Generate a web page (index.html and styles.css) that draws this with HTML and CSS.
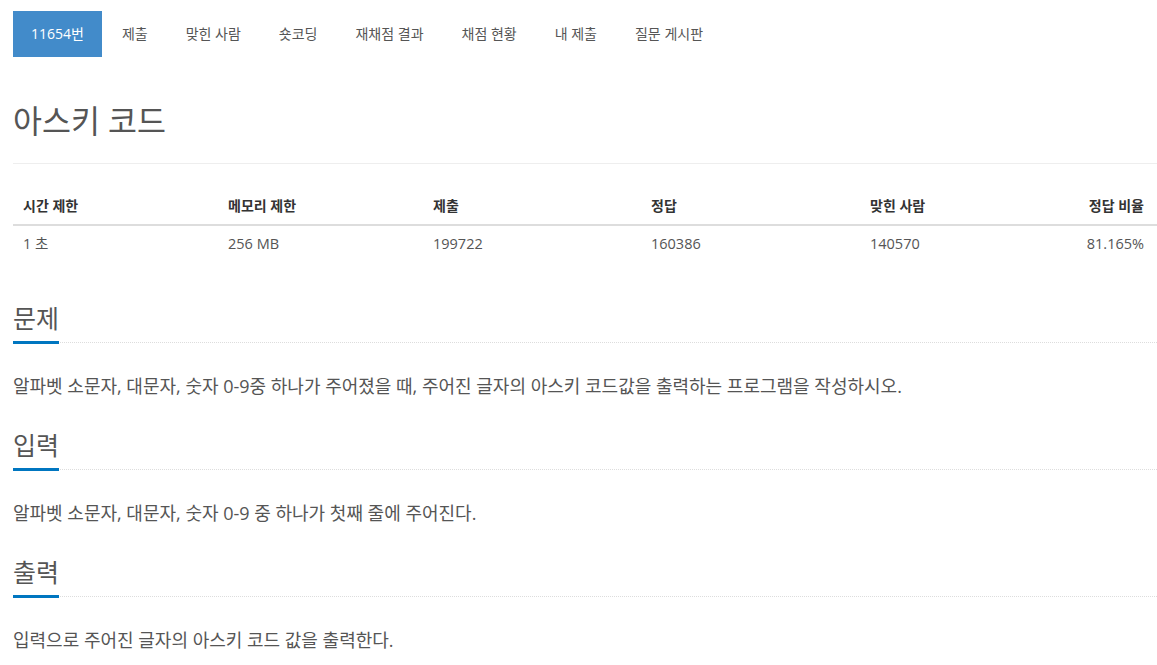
FILE: index.html
```html
<!DOCTYPE html>
<html lang="ko">
<head>
<meta charset="utf-8">
<title>아스키 코드</title>
<link rel="stylesheet" href="styles.css">
</head>
<body>
<ul class="nav">
  <li class="tab active">11654번</li>
  <li class="tab">제출</li>
  <li class="tab">맞힌 사람</li>
  <li class="tab">숏코딩</li>
  <li class="tab">재채점 결과</li>
  <li class="tab">채점 현황</li>
  <li class="tab">내 제출</li>
  <li class="tab">질문 게시판</li>
</ul>
<main class="content">
  <h1 class="title">아스키 코드</h1>
  <table class="info">
    <colgroup>
      <col class="c1"><col class="c2"><col class="c3"><col class="c4"><col class="c5"><col class="c6">
    </colgroup>
    <thead>
      <tr><th>시간 제한</th><th>메모리 제한</th><th>제출</th><th>정답</th><th>맞힌 사람</th><th class="right">정답 비율</th></tr>
    </thead>
    <tbody>
      <tr><td>1 초 </td><td>256 MB</td><td>199722</td><td>160386</td><td>140570</td><td class="right">81.165%</td></tr>
    </tbody>
  </table>
  <section class="section">
    <div class="headline"><h2>문제</h2></div>
    <p>알파벳 소문자, 대문자, 숫자 0-9중 하나가 주어졌을 때, 주어진 글자의 아스키 코드값을 출력하는 프로그램을 작성하시오.</p>
  </section>
  <section class="section">
    <div class="headline"><h2>입력</h2></div>
    <p>알파벳 소문자, 대문자, 숫자 0-9 중 하나가 첫째 줄에 주어진다.</p>
  </section>
  <section class="section">
    <div class="headline"><h2>출력</h2></div>
    <p>입력으로 주어진 글자의 아스키 코드 값을 출력한다.</p>
  </section>
</main>
</body>
</html>
```
FILE: styles.css
```css
html, body {
  margin: 0;
  padding: 0;
  background: #fff;
}
body {
  font-family: "Open Sans", "Noto Sans CJK KR", sans-serif;
  color: #555;
  overflow: hidden;
}
.nav {
  list-style: none;
  margin: 11px 0 0 0;
  padding: 0 0 0 13px;
  display: flex;
  gap: 2px;
}
.tab {
  height: 46px;
  line-height: 46px;
  padding: 0 18px;
  font-size: 14px;
  color: #555;
  white-space: nowrap;
}
.tab.active {
  background: #428bca;
  color: #fff;
}
.content {
  padding-left: 13px;
}
.title {
  margin: 44px 0 0 0;
  padding-bottom: 22px;
  font-size: 31.5px;
  line-height: 40px;
  font-weight: 400;
  color: #555;
  border-bottom: 1px solid #eee;
}
.info {
  margin-top: 24px;
  width: 1144px;
  border-collapse: collapse;
  table-layout: fixed;
  font-size: 14px;
}
.c1 { width: 205px; }
.c2 { width: 205px; }
.c3 { width: 218px; }
.c4 { width: 219px; }
.c5 { width: 200px; }
.c6 { width: 97px; }
.info th, .info td {
  padding: 8px 10px;
  line-height: 20px;
  text-align: left;
  color: #333;
  white-space: nowrap;
}
.info th {
  font-weight: 700;
  border-bottom: 2px solid #ddd;
}
.info td {
  color: #555;
  font-size: 14.5px;
}
.info .right {
  text-align: right;
  padding-right: 13px;
}
.section {
  margin-top: 39px;
}
.section + .section {
  margin-top: 30px;
}
.headline {
  border-bottom: 1px dotted #ddd;
  line-height: 0;
}
.headline h2 {
  display: inline-block;
  margin: 0 0 -2px 0;
  padding-bottom: 6px;
  font-size: 25px;
  line-height: 34px;
  font-weight: 400;
  color: #555;
  border-bottom: 3px solid #0076c0;
}
.section p {
  margin: 31px 0 0 0;
  font-size: 18px;
  line-height: 24px;
  color: #555;
}
```
